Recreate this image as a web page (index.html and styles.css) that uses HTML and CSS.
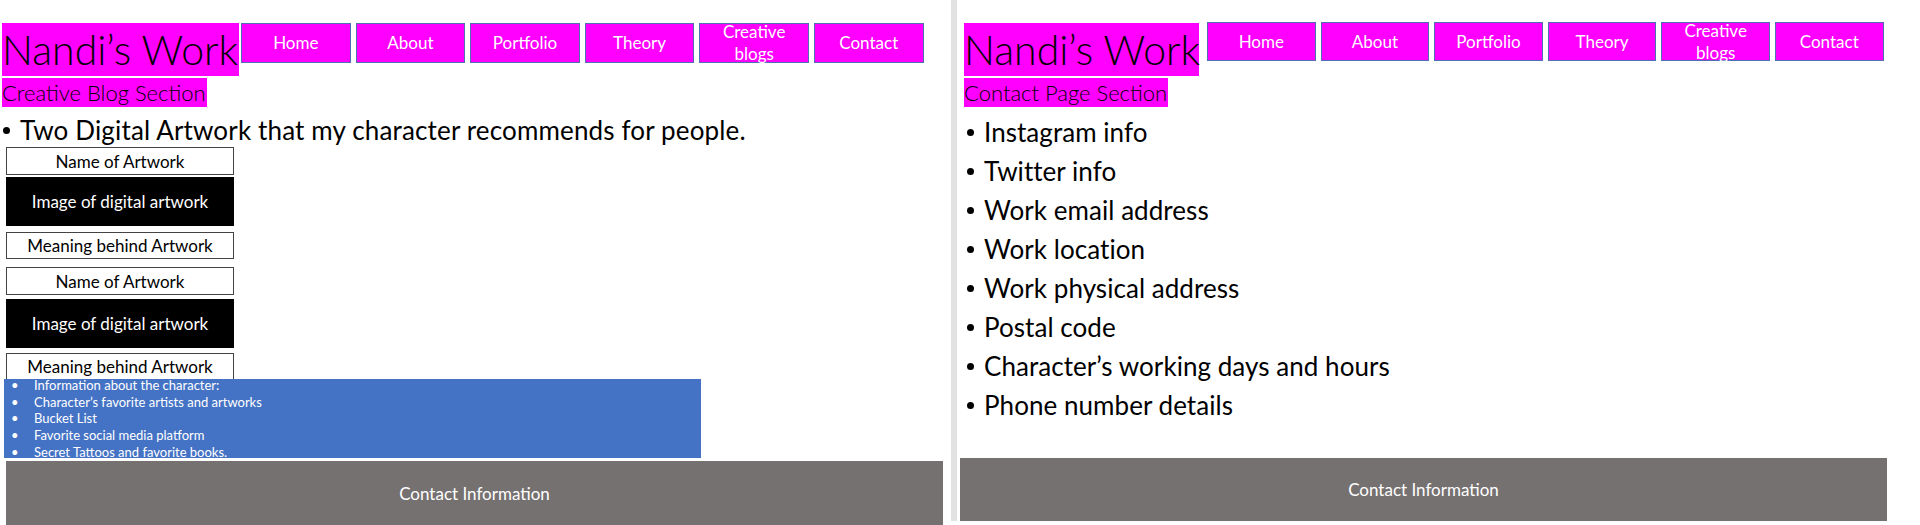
FILE: index.html
```html
<html>

<head>
    <link rel="stylesheet" href="styles.css">
    <title>Nandi's Work wireframes</title>
</head>

<body>
    <div id="sheet">
        <!-- creative blog page -->
        <div class="page blog">
            <div class="top">
                <h1>Nandi’s Work</h1>
                <ul class="nav">
                    <li>Home</li>
                    <li>About</li>
                    <li>Portfolio</li>
                    <li>Theory</li>
                    <li>Creative blogs</li>
                    <li>Contact</li>
                </ul>
            </div>
            <h2>Creative Blog Section</h2>
            <ul class="points one">
                <li>Two Digital Artwork that my character recommends for people.</li>
            </ul>
            <div class="box name">Name of Artwork</div>
            <div class="box art">Image of digital artwork</div>
            <div class="box meaning">Meaning behind Artwork</div>
            <div class="box name second">Name of Artwork</div>
            <div class="box art">Image of digital artwork</div>
            <div class="box meaning clipped">Meaning behind Artwork</div>
            <ul class="info">
                <li>Information about the character:</li>
                <li>Character’s favorite artists and artworks</li>
                <li>Bucket List</li>
                <li>Favorite social media platform</li>
                <li>Secret Tattoos and favorite books.</li>
            </ul>
            <div class="foot">Contact Information</div>
        </div>

        <!-- contact page -->
        <div class="page contact">
            <div class="top">
                <h1>Nandi’s Work</h1>
                <ul class="nav">
                    <li>Home</li>
                    <li>About</li>
                    <li>Portfolio</li>
                    <li>Theory</li>
                    <li>Creative blogs</li>
                    <li>Contact</li>
                </ul>
            </div>
            <h2>Contact Page Section</h2>
            <ul class="points many">
                <li>Instagram info</li>
                <li>Twitter info</li>
                <li>Work email address</li>
                <li>Work location</li>
                <li>Work physical address</li>
                <li>Postal code</li>
                <li>Character’s working days and hours</li>
                <li>Phone number details</li>
            </ul>
            <div class="foot">Contact Information</div>
        </div>
    </div>
</body>

</html>
```

FILE: styles.css
```css
html,
body {
    margin: 0;
    height: 525px;
    overflow: hidden;
    background-color: white;
    font-family: "Lato", "Liberation Sans", sans-serif;
    color: black;
}

ul {
    margin: 0;
    padding: 0;
    list-style: none;
}

#sheet {
    display: grid;
    grid-template-columns: 951px 1fr;
    height: 525px;
}

.page {
    padding-top: 23px;
}

.blog {
    padding-left: 2px;
}

.contact {
    height: 498px;
    padding-left: 7px;
    border-left: 6px solid #e2e2e2;
}

.top {
    display: flex;
    align-items: flex-start;
}

h1 {
    margin: 0;
    width: 237px;
    height: 53px;
    background-color: #ff00ff;
    font-size: 41px;
    font-weight: 300;
    line-height: 53px;
    white-space: nowrap;
}

.nav {
    display: flex;
    gap: 5px;
    margin-left: 2px;
}

.nav li {
    box-sizing: border-box;
    display: flex;
    align-items: center;
    justify-content: center;
    width: 109.6px;
    height: 40px;
    padding: 0 20px;
    border: 1px solid #4f6fb5;
    background-color: #ff00ff;
    color: white;
    font-size: 17px;
    line-height: 22px;
    text-align: center;
}

.contact h1 {
    width: 235px;
}

.contact .nav {
    margin-left: 8px;
    margin-top: -1px;
}

.contact .nav li {
    width: 108.6px;
    height: 39px;
}

h2 {
    width: fit-content;
    margin: 2px 0 0;
    padding-right: 1px;
    height: 29px;
    background-color: #ff00ff;
    font-size: 22px;
    font-weight: 300;
    line-height: 29px;
}

.points li {
    position: relative;
    padding-left: 18px;
    font-size: 26px;
    letter-spacing: 0.15px;
    line-height: 39px;
}

.points li::before {
    content: "";
    position: absolute;
    left: 1px;
    top: 16px;
    width: 7px;
    height: 7px;
    border-radius: 50%;
    background-color: black;
}

.one {
    height: 36px;
    padding-top: 4px;
}

.many {
    margin-top: 6px;
    padding-left: 2px;
}

.many li {
    letter-spacing: 0.05px;
}

.blog .box {
    box-sizing: border-box;
    display: flex;
    align-items: center;
    justify-content: center;
    width: 228px;
    margin-left: 4px;
    font-size: 17px;
}

.name {
    height: 28px;
    border: 1px solid #444;
}

.art {
    height: 49px;
    margin-top: 2px;
    background-color: black;
    color: white;
}

.meaning {
    height: 27px;
    margin-top: 6px;
    border: 1px solid #444;
}

.second {
    margin-top: 8px;
}

.second + .art {
    margin-top: 4px;
}

.clipped {
    height: 26px;
    margin-top: 5px;
    border-bottom: 0;
}

.info {
    box-sizing: border-box;
    display: flow-root;
    width: 697px;
    height: 79px;
    margin-left: 2px;
    padding-left: 30px;
    background-color: #4472c4;
    color: white;
    font-size: 13px;
    line-height: 16.7px;
}

.info li {
    position: relative;
    height: 16.7px;
}

.info li:first-child {
    margin-top: -2px;
}

.info li::before {
    content: "•";
    position: absolute;
    left: -23px;
}

.foot {
    display: flex;
    align-items: center;
    justify-content: center;
    background-color: #767171;
    color: white;
    font-size: 17px;
}

.blog .foot {
    width: 937px;
    height: 64px;
    margin-left: 4px;
    margin-top: 3px;
}

.contact .foot {
    width: 927px;
    height: 63px;
    margin-left: -4px;
    margin-top: 33px;
}
```
